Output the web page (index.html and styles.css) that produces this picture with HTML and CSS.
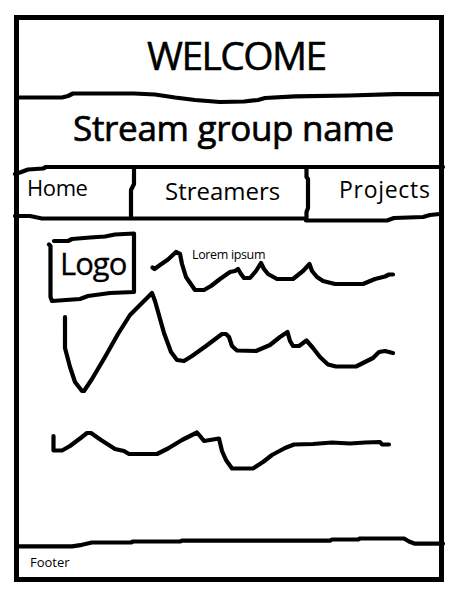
FILE: index.html
```html
<!DOCTYPE html>
<html lang="en">
<head>
<meta charset="utf-8">
<title>Stream group name</title>
<link rel="stylesheet" href="styles.css">
</head>
<body>
<div class="frame">
  <header class="welcome"><span>WELCOME</span></header>
  <h1 class="title"><span>Stream group name</span></h1>
  <nav class="nav">
    <a class="home">Home</a>
    <a class="streamers">Streamers</a>
    <a class="projects">Projects</a>
  </nav>
  <main class="content">
    <div class="logo">Logo</div>
    <p class="lorem">Lorem ipsum</p>
  </main>
  <footer class="footer"><span>Footer</span></footer>
</div>
<svg class="strokes" viewBox="0 0 458 597" aria-hidden="true">
  <!-- section dividers -->
  <path d="M18 97.5H62L68 96L73 93.5H134L155 94.5L175 97.5L195 100L220 102L244 101.500L258 100L265 98L295 96.300L349 95.500L395 94.200H440"/>
  <path d="M15 174L20 172.500L28 169.500L43 168.500L46 167H443"/>
  <path d="M15 216H30L42 218.500H306V220.500H387L394 218L423 217L430 215L440 214"/>
  <path d="M134 168V184L131 190V218"/>
  <path d="M306.500 168V177L308 179V208L306.500 212V220"/>
  <path d="M18 546.300H72L82 544.800L92 542.500H131L133 541.500H180L182 540.700H330L332 539.500H358L360 538.500H404L409 541.500L415 543.700H443"/>
  <!-- logo box -->
  <path d="M54 241H68L72 239L90 237.500L105 236.500L115 234.500L134 233.500V292L110 293L88 296L80 299L52 301L50.500 297V246L49 244.500"/>
  <!-- placeholder text lines -->
  <path d="M152.500 267.500L154.500 269L160 265L168 259.500L176 252L180 254L182 264L186 277L195 290H204L211 286L220 279L230 272L235 271L238 269L241 274L244 278H250L256 271L261 263L264 269L268 274L277 279H293L303 271L309.500 264L312 271L317 277L323 281L335 284H363L375 279L385 276.500L389 274.500H393"/>
  <path d="M65 317V348L70 367L75 382L82 391H84L92 379L105 357L118 334L130 315L142 303L152 293L155 301L164 333L171 352L177 360L184 361L192 356L206 346L222 334H226L229 337L232 346L237 350.500L256 351L270 345L280 337L287.500 332L290 341L293 346H299L306.500 340.500L313 348L320 357L328 364.500L336 366.500H356L363 363L373 358L379 352L385 351L393 353"/>
  <path d="M53.500 436V450.500H62L70 446L80 438.500L87 433H91L101 440L115 449L124 451L129 454H157L168 448.500L182 440L197 432.500L200 436L204 441L219 438.500L222 451L226 460L232 468.500H253L263 462L272 455L285 448L294 444.500L313 444L332 442.500L350 443.500L365 442.500L380 442L382 444.500H389"/>
</svg>
</body>
</html>
```
FILE: styles.css
```css
* { box-sizing: border-box; }

body {
  margin: 0;
  padding: 15px 14px;
  background: #fff;
  color: #000;
  font-family: "Open Sans", "Noto Sans", sans-serif;
}

.frame {
  display: grid;
  grid-template-rows: 77px 70px 52px 325px 32px;
  width: 430px;
  height: 567px;
  border: 5px solid #000;
}

.welcome {
  padding-left: 128px;
  font-size: 39px;
  line-height: 70px;
  letter-spacing: -1.6px;
  -webkit-text-stroke: 0.5px #000;
}

.title {
  margin: 0;
  padding-left: 54px;
  font-size: 35px;
  font-weight: 400;
  line-height: 62px;
  letter-spacing: -0.3px;
  white-space: nowrap;
  -webkit-text-stroke: 0.7px #000;
}

.nav {
  display: grid;
  grid-template-columns: 114px 174px 132px;
}

.home {
  padding-left: 8px;
  font-size: 22px;
  line-height: 41px;
  letter-spacing: -0.4px;
}

.streamers {
  padding-left: 32px;
  font-size: 24px;
  line-height: 48px;
}

.projects {
  padding-left: 32px;
  font-size: 23px;
  line-height: 45px;
  letter-spacing: 0.7px;
}

.content {
  display: grid;
  grid-template-columns: 132px 1fr;
  align-items: start;
  padding: 23px 0 0 41px;
}

.logo {
  font-size: 31px;
  line-height: 42px;
  letter-spacing: -1px;
  -webkit-text-stroke: 0.3px #000;
}

.lorem {
  margin: 5px 0 0;
  font-size: 12.5px;
  line-height: 16px;
  letter-spacing: -0.35px;
}

.footer {
  padding: 10px 0 0 11px;
  font-size: 13px;
  line-height: 16px;
}

/* Hand-drawn strokes run across section and frame edges. */
.strokes {
  position: absolute;
  top: 0;
  left: 0;
  width: 458px;
  height: 597px;
  fill: none;
  stroke: #000;
  stroke-width: 4.2;
  stroke-linecap: round;
  stroke-linejoin: round;
  pointer-events: none;
}
```
